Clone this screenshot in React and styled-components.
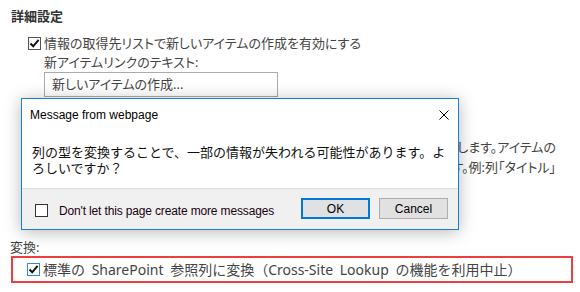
import styled, { createGlobalStyle } from 'styled-components';

const GlobalStyle = createGlobalStyle`
  html, body {
    margin: 0;
    padding: 0;
    background: #fff;
  }
  body {
    width: 580px;
    height: 292px;
    overflow: hidden;
  }
`;

const Page = styled.div`
  position: relative;
  width: 580px;
  height: 292px;
  box-sizing: border-box;
  padding: 8px 0 0 10px;
  font-family: "Noto Sans", "Noto Sans CJK JP", sans-serif;
  font-feature-settings: "palt";
  font-size: 13px;
  color: #444;
`;

const Heading = styled.div`
  font-weight: bold;
  line-height: 16px;
  margin-left: 1px;
  color: #333;
`;

const Section = styled.div`
  margin-top: 10px;
  padding-left: ${(p) => p.$indent || 0}px;
`;

const CheckRow = styled.label`
  display: flex;
  align-items: center;
  gap: 3px;
  height: 19px;
  line-height: 19px;
  white-space: nowrap;
`;

const Box = styled.span`
  width: 11px;
  height: 11px;
  border: 1px solid ${(p) => (p.$focus ? '#2a8fd8' : '#555')};
  background: #fff;
  display: inline-flex;
  align-items: center;
  justify-content: center;
  flex: none;
`;

const Indented = styled.div`
  padding-left: 16px;
`;

const FieldLabel = styled.div`
  line-height: 19px;
`;

const TextInput = styled.div`
  width: 225px;
  height: 23px;
  border: 1px solid #ababab;
  padding-left: 7px;
  line-height: 23px;
`;

const Description = styled.div`
  margin-top: 40px;
  width: 512px;
`;

const DescLine = styled.div`
  display: flex;
  justify-content: flex-end;
  white-space: nowrap;
  line-height: 20px;
`;

const Caption = styled.div`
  margin-top: 61px;
  line-height: 18px;
`;

const Highlight = styled.div`
  margin-left: 1px;
  width: 544px;
  height: 23px;
  border: 2px solid #ee3f3f;
  display: flex;
  align-items: center;
  padding-left: 14px;
  font-size: 14px;
  font-feature-settings: normal;
  word-spacing: 3px;
`;

const Dialog = styled.div`
  position: absolute;
  left: 21px;
  top: 98px;
  width: 436px;
  height: 130px;
  border: 1px solid #1a7fd4;
  background: #fff;
  box-shadow: 0 2px 16px rgba(0, 0, 0, 0.28);
  display: flex;
  flex-direction: column;
  font-family: "Noto Sans CJK JP", sans-serif;
  font-feature-settings: normal;
  color: #000;
`;

const TitleBar = styled.div`
  height: 32px;
  display: flex;
  align-items: center;
  justify-content: space-between;
  padding: 0 9px 0 8px;
  font-family: "Liberation Sans", Arial, sans-serif;
  font-size: 12px;
`;

const Close = styled.span`
  display: inline-flex;
  width: 10px;
  height: 10px;
  margin-top: -1px;
`;

const Body = styled.div`
  flex: 1;
  padding: 13px 10px 0;
  font-size: 13px;
  line-height: 16px;
  color: #111;
`;

const Footer = styled.div`
  height: 40px;
  background: #f0f0f0;
  border-top: 1px solid #dfdfdf;
  display: flex;
  align-items: center;
  padding: 0 10px 0 13px;
  font-family: "Liberation Sans", Arial, sans-serif;
  font-size: 12px;
`;

const Suppress = styled.label`
  display: flex;
  align-items: center;
  gap: 11px;
  flex: 1;
  color: #1a0010;
  margin-top: 3px;
  letter-spacing: -0.15px;
`;

const PlainBox = styled.span`
  width: 11px;
  height: 11px;
  border: 1px solid #333;
  background: #fff;
`;

const Buttons = styled.div`
  display: flex;
  gap: 9px;
  margin-top: -1px;
`;

const Button = styled.button`
  width: 69px;
  height: 21px;
  box-sizing: border-box;
  background: #e1e1e1;
  border: ${(p) => (p.$primary ? '2px solid #0078d7' : '1px solid #adadad')};
  font-family: "Liberation Sans", Arial, sans-serif;
  font-size: 12px;
  color: #000;
  padding: 0;
  outline: none;
`;

const Check = () => (
  <svg width="11" height="11" viewBox="0 0 11 11">
    <path d="M1.5 5.5 L4.2 8.3 L9.6 1.8" fill="none" stroke="#111" strokeWidth="2" />
  </svg>
);

export default function App() {
  return (
    <>
      <GlobalStyle />
      <Page>
        <Heading>詳細設定</Heading>
        <Section $indent={18}>
          <CheckRow>
            <Box><Check /></Box>
            情報の取得先リストで新しいアイテムの作成を有効にする
          </CheckRow>
          <Indented>
            <FieldLabel>新アイテムリンクのテキスト:</FieldLabel>
            <TextInput>新しいアイテムの作成...</TextInput>
            <Description>
              <DescLine>新しいアイテムを作成するリンクを、このフォームに表示します。アイテムの</DescLine>
              <DescLine>作成後は元のフォームに戻り、値が入力されます。例:列「タイトル」</DescLine>
            </Description>
          </Indented>
        </Section>
        <Caption>変換:</Caption>
        <Highlight>
          <CheckRow>
            <Box $focus><Check /></Box>
            標準の SharePoint 参照列に変換（Cross-Site Lookup の機能を利用中止）
          </CheckRow>
        </Highlight>

        <Dialog>
          <TitleBar>
            <span>Message from webpage</span>
            <Close>
              <svg width="10" height="10" viewBox="0 0 10 10">
                <path d="M0.5 0.5 L9.5 9.5 M9.5 0.5 L0.5 9.5" stroke="#000" strokeWidth="1" />
              </svg>
            </Close>
          </TitleBar>
          <Body>
            列の型を変換することで、一部の情報が失われる可能性があります。よ
            <br />
            ろしいですか？
          </Body>
          <Footer>
            <Suppress>
              <PlainBox />
              Don't let this page create more messages
            </Suppress>
            <Buttons>
              <Button $primary>OK</Button>
              <Button>Cancel</Button>
            </Buttons>
          </Footer>
        </Dialog>
      </Page>
    </>
  );
}
